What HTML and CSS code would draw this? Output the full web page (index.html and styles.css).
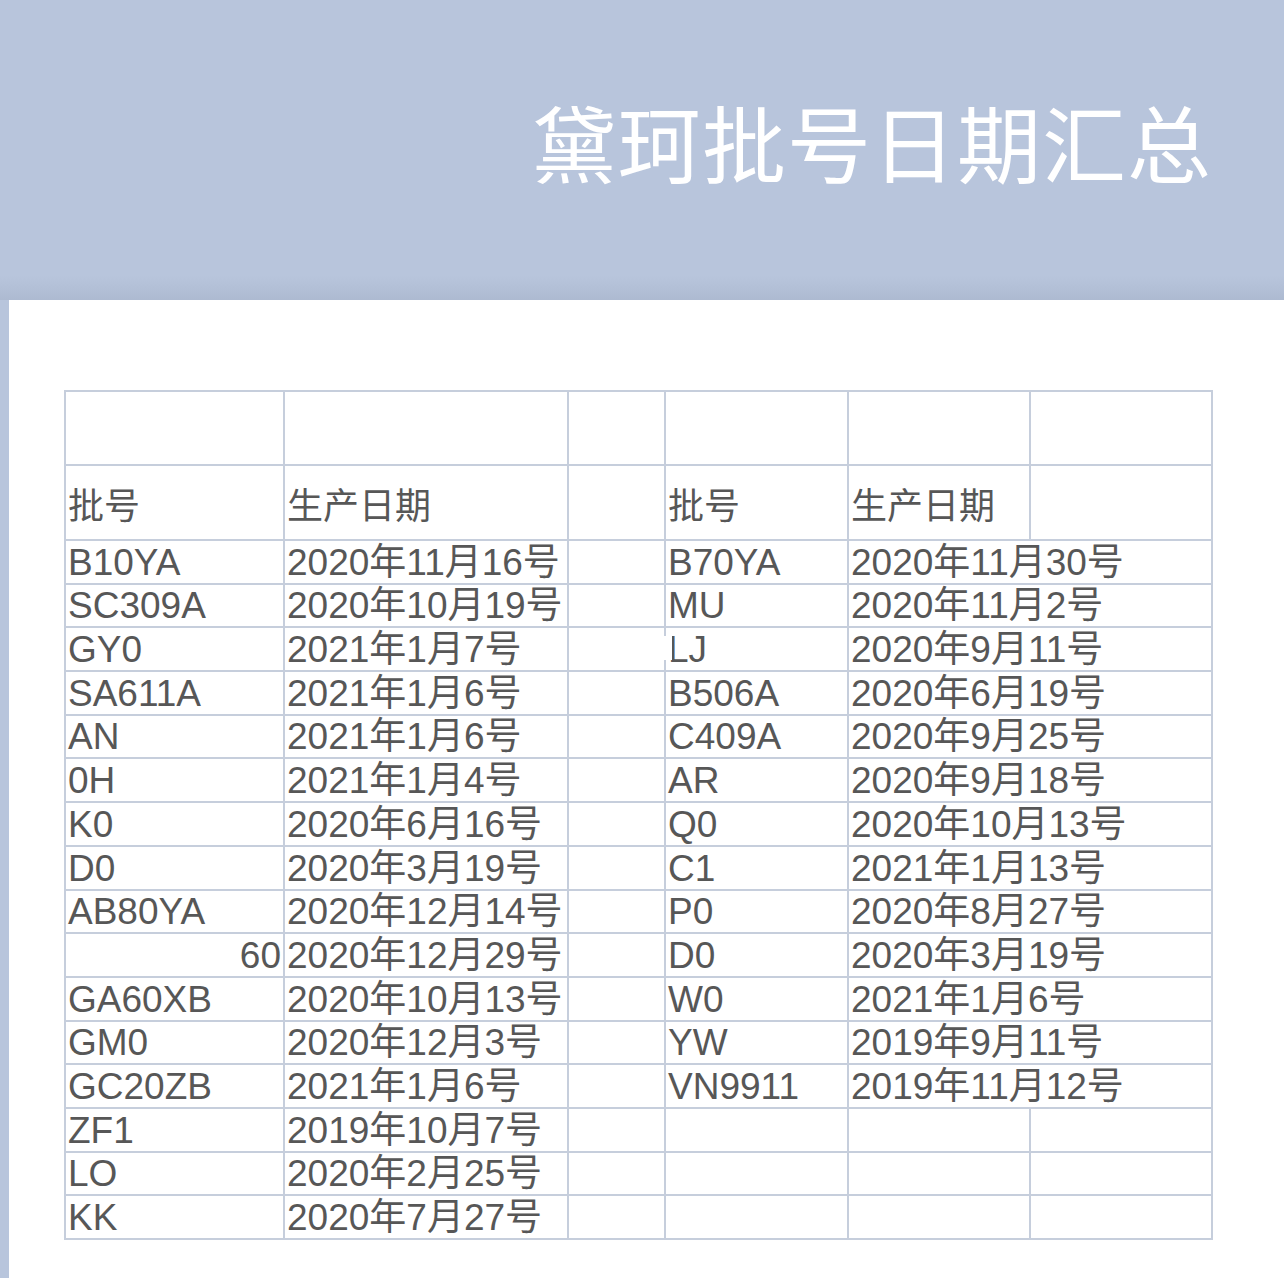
FILE: index.html
```html
<!DOCTYPE html>
<html lang="zh">
<head>
<meta charset="utf-8">
<title>黛珂批号日期汇总</title>
<link rel="stylesheet" href="styles.css">
</head>
<body>
<header class="band">
  <h1 class="title">黛珂批号日期汇总</h1>
</header>
<main class="panel">
  <table class="sheet">
    <colgroup>
      <col class="c1"><col class="c2"><col class="c3"><col class="c4"><col class="c5"><col class="c6">
    </colgroup>
    <tbody>
      <tr class="blank-row"><td></td><td></td><td></td><td></td><td></td><td></td></tr>
      <tr class="head-row"><td>批号</td><td>生产日期</td><td></td><td>批号</td><td>生产日期</td><td></td></tr>
      <tr><td>B10YA</td><td>2020年11月16号</td><td></td><td>B70YA</td><td colspan="2">2020年11月30号</td></tr>
      <tr><td>SC309A</td><td>2020年10月19号</td><td></td><td>MU</td><td colspan="2">2020年11月2号</td></tr>
      <tr><td>GY0</td><td>2021年1月7号</td><td></td><td class="smudged">LJ</td><td colspan="2">2020年9月11号</td></tr>
      <tr><td>SA611A</td><td>2021年1月6号</td><td></td><td>B506A</td><td colspan="2">2020年6月19号</td></tr>
      <tr><td>AN</td><td>2021年1月6号</td><td></td><td>C409A</td><td colspan="2">2020年9月25号</td></tr>
      <tr><td>0H</td><td>2021年1月4号</td><td></td><td>AR</td><td colspan="2">2020年9月18号</td></tr>
      <tr><td>K0</td><td>2020年6月16号</td><td></td><td>Q0</td><td colspan="2">2020年10月13号</td></tr>
      <tr><td>D0</td><td>2020年3月19号</td><td></td><td>C1</td><td colspan="2">2021年1月13号</td></tr>
      <tr><td>AB80YA</td><td>2020年12月14号</td><td></td><td>P0</td><td colspan="2">2020年8月27号</td></tr>
      <tr><td class="num">60</td><td>2020年12月29号</td><td></td><td>D0</td><td colspan="2">2020年3月19号</td></tr>
      <tr><td>GA60XB</td><td>2020年10月13号</td><td></td><td>W0</td><td colspan="2">2021年1月6号</td></tr>
      <tr><td>GM0</td><td>2020年12月3号</td><td></td><td>YW</td><td colspan="2">2019年9月11号</td></tr>
      <tr><td>GC20ZB</td><td>2021年1月6号</td><td></td><td>VN9911</td><td colspan="2">2019年11月12号</td></tr>
      <tr><td>ZF1</td><td>2019年10月7号</td><td></td><td></td><td></td><td></td></tr>
      <tr><td>LO</td><td>2020年2月25号</td><td></td><td></td><td></td><td></td></tr>
      <tr><td>KK</td><td>2020年7月27号</td><td></td><td></td><td></td><td></td></tr>
    </tbody>
  </table>
</main>
</body>
</html>
```

FILE: styles.css
```css
html, body {
  margin: 0;
  padding: 0;
}
body {
  background: #b8c5dc;
  width: 1284px;
  min-height: 1278px;
  font-family: "Liberation Sans", "Noto Sans CJK SC", sans-serif;
}
.band {
  height: 300px;
  box-sizing: border-box;
  background: linear-gradient(to bottom, #b8c5dc 0%, #b8c5dc 92%, #adbad1 100%);
  display: flex;
  justify-content: flex-end;
  align-items: flex-start;
  padding-right: 72px;
  padding-top: 86px;
}
.title {
  margin: 0;
  font-family: "Noto Sans CJK SC", sans-serif;
  font-weight: 400;
  font-size: 84px;
  line-height: 1.3;
  color: #ffffff;
  letter-spacing: 1px;
}
.panel {
  margin-left: 9px;
  background: #ffffff;
  min-height: 978px;
  box-sizing: border-box;
  padding-top: 90px;
  padding-left: 55px;
}
.sheet {
  border-collapse: collapse;
  table-layout: fixed;
  width: 1149px;
  color: #575757;
  font-size: 37px;
}
.c1 { width: 219px; }
.c2 { width: 284px; }
.c3 { width: 97px; }
.c4 { width: 183px; }
.c5 { width: 182px; }
.c6 { width: 182px; }
.sheet td {
  border: 2px solid #c6cedc;
  padding: 0 2px;
  white-space: nowrap;
  overflow: visible;
  vertical-align: bottom;
  line-height: 40px;
  height: 43.7px;
  box-sizing: border-box;
}
.sheet .blank-row td {
  height: 74px;
}
.sheet .head-row td {
  height: 75px;
  vertical-align: middle;
  line-height: 40px;
  font-family: "Noto Sans CJK SC", sans-serif;
  font-size: 36px;
  padding-top: 0;
}
.sheet td.num {
  text-align: right;
}
.sheet td.smudged {
  position: relative;
}
.sheet td.smudged::before {
  content: "";
  position: absolute;
  left: -3px;
  top: 8px;
  width: 9px;
  height: 24px;
  background: #ffffff;
}
```
